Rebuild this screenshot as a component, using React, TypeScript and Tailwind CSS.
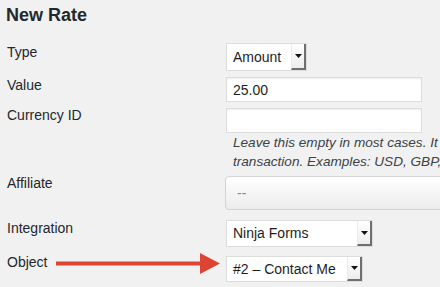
const font = "font-['Liberation_Sans',Arial,sans-serif]";

function Caret() {
    return (
        <svg width="7" height="4" viewBox="0 0 7 4">
            <polygon points="0,0 7,0 3.5,4" fill="#111" />
        </svg>
    );
}

function NativeSelect({ text, className }: { text: string; className: string }) {
    return (
        <div className={`flex border border-[#dddddd] bg-white ${className}`}>
            <span className="flex flex-1 items-center overflow-hidden whitespace-nowrap pl-[6px] text-[14px] text-[#1e1e1e]">
                {text}
            </span>
            <span className="flex w-[15px] items-center justify-center border-b-2 border-r-2 border-l border-b-[#6f6f6f] border-r-[#6f6f6f] border-l-[#ececec] bg-linear-to-b from-white to-[#ededed]">
                <Caret />
            </span>
        </div>
    );
}

function Label({ children, className }: { children: string; className: string }) {
    return <div className={`w-[219px] shrink-0 text-[14px] leading-[18px] ${className}`}>{children}</div>;
}

export default function App() {
    return (
        <div className={`h-[287px] w-[440px] overflow-hidden bg-[#f1f1f1] pl-[7px] text-[#23282d] ${font}`}>
            <h2 className="-ml-px pt-[3px] text-[18px] font-bold leading-6">New Rate</h2>

            <div className="mt-[16px] flex items-start">
                <Label className="">Type</Label>
                <NativeSelect text="Amount" className="h-[28px] w-[81px]" />
            </div>

            <div className="mt-[6px] flex items-start">
                <Label className="-mt-px">Value</Label>
                <input
                    type="text"
                    defaultValue="25.00"
                    className="h-[25px] w-[196px] border border-[#dddddd] bg-white pl-[6px] text-[14px] text-[#1e1e1e] shadow-[inset_0_1px_2px_rgba(0,0,0,0.07)] outline-none"
                />
            </div>

            <div className="mt-[6px] flex items-start">
                <Label className="-mt-0.5">Currency ID</Label>
                <div className="flex flex-col">
                    <input
                        type="text"
                        className="h-[25px] w-[196px] border border-[#dddddd] bg-white pl-[6px] text-[14px] shadow-[inset_0_1px_2px_rgba(0,0,0,0.07)] outline-none"
                    />
                    <p className="whitespace-nowrap pl-[7px] text-[13.6px] italic leading-[19px] text-[#3c4247]">
                        Leave this empty in most cases. It
                        <br />
                        transaction. Examples: USD, GBP,
                    </p>
                </div>
            </div>

            <div className="mt-[5px] flex items-start">
                <Label className="-mt-0.5">Affiliate</Label>
                <div className="-ml-px flex h-[34px] w-[240px] shrink-0 items-center rounded-[4px] border border-[#d4d4d4] bg-linear-to-b from-white to-[#ececec] pl-[11px] text-[14px] text-[#888888]">
                    --
                </div>
            </div>

            <div className="mt-[10px] flex items-start">
                <Label className="-mt-px">Integration</Label>
                <NativeSelect text="Ninja Forms" className="h-[27px] w-[147px]" />
            </div>

            <div className="relative mt-[9px] flex items-start">
                <Label className="-mt-[3px]">Object</Label>
                <NativeSelect text="#2 – Contact Me" className="h-[26px] w-[137px]" />
                <svg
                    className="absolute left-[49px] top-[-3px]"
                    width="164"
                    height="21"
                    viewBox="0 0 164 21"
                >
                    <rect x="0" y="8.5" width="146" height="4" fill="#dd4532" />
                    <polygon points="144,0 164,10.5 144,21" fill="#dd4532" />
                </svg>
            </div>
        </div>
    );
}
